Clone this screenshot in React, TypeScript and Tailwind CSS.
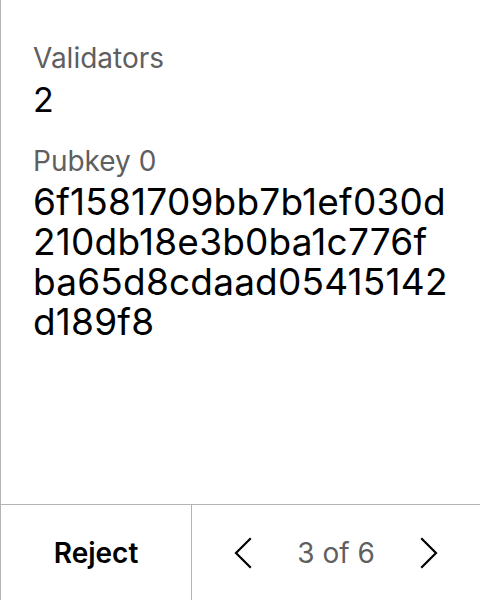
import React from 'react';

// rows as the device screen wraps the key
const pubkeyLines = ['6f1581709bb7b1ef030d', '210db18e3b0ba1c776f', 'ba65d8cdaad05415142', 'd189f8'];

const Chevron = ({ dir }: { dir: 'left' | 'right' }) => (
  <svg width="18" height="32" viewBox="0 0 18 32" fill="none" stroke="black" strokeWidth="2.2" strokeLinecap="square">
    {dir === 'left' ? <polyline points="16,2 2,16 16,30" /> : <polyline points="2,2 16,16 2,30" />}
  </svg>
);

const App = () => {
  return (
    <div
      className="w-[480px] h-[600px] flex flex-col bg-white border-l border-[#b3b3b3] text-black"
      style={{ fontFamily: 'Inter, "Noto Sans", sans-serif' }}
    >
      <div className="flex-1 pl-8 pt-10">
        <div className="text-[28px] leading-[36px] text-[#5f5f5f]">Validators</div>
        <div className="text-[34px] leading-[40px] mt-1">2</div>
        <div className="text-[28px] leading-[36px] text-[#5f5f5f] mt-[23px]">Pubkey 0</div>
        <div className="text-[37px] leading-[40px] tracking-[0.2px] mt-[3px] whitespace-nowrap">
          {pubkeyLines.map((line) => (
            <div key={line}>{line}</div>
          ))}
        </div>
      </div>
      <div className="h-[96px] flex border-t border-[#b3b3b3]">
        <button className="w-[191px] flex items-center justify-center text-[28px] font-semibold border-r border-[#b3b3b3]">
          Reject
        </button>
        <div className="flex-1 flex items-center justify-between px-[42px]">
          <Chevron dir="left" />
          <span className="text-[28px] text-[#5f5f5f]">3 of 6</span>
          <Chevron dir="right" />
        </div>
      </div>
    </div>
  );
};

export default App;
